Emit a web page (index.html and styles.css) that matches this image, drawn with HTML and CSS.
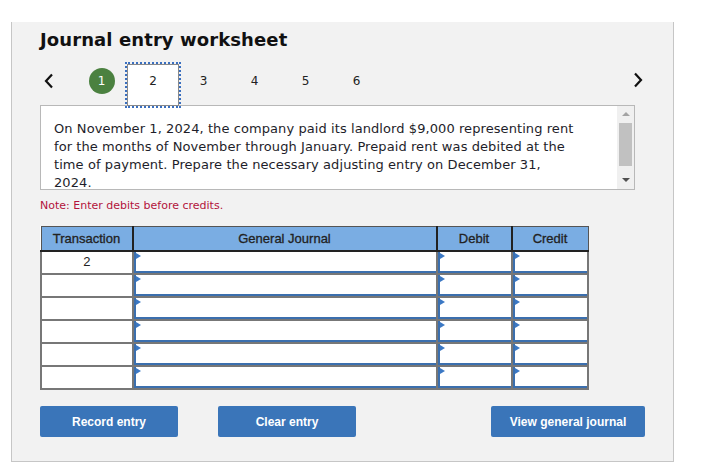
FILE: index.html
```html
<!DOCTYPE html>
<html>
<head>
<meta charset="utf-8">
<link rel="stylesheet" href="styles.css">
</head>
<body>
<div class="panel">
  <h1 class="title">Journal entry worksheet</h1>
  <div class="stepper">
    <span class="nav prev"><svg width="10" height="16" viewBox="0 0 10 16"><path d="M8 1.5 L2 8 L8 14.5" fill="none" stroke="#111" stroke-width="2.2"/></svg></span>
    <div class="steps">
      <span class="step done"><span class="dot">1</span></span>
      <span class="step active">2</span>
      <span class="step">3</span>
      <span class="step">4</span>
      <span class="step">5</span>
      <span class="step">6</span>
    </div>
    <span class="nav next"><svg width="10" height="16" viewBox="0 0 10 16"><path d="M2 1.5 L8 8 L2 14.5" fill="none" stroke="#111" stroke-width="2.2"/></svg></span>
  </div>
  <div class="problem">
    <div class="problem-text">On November 1, 2024, the company paid its landlord $9,000 representing rent for the months of November through January. Prepaid rent was debited at the time of payment. Prepare the necessary adjusting entry on December 31, 2024.</div>
    <div class="scrollbar">
      <span class="arrow up"></span>
      <span class="thumb"></span>
      <span class="arrow down"></span>
    </div>
  </div>
  <div class="note">Note: Enter debits before credits.</div>
  <table class="journal">
    <thead>
      <tr><th class="c-tr">Transaction</th><th class="c-gj">General Journal</th><th class="c-dr">Debit</th><th class="c-cr">Credit</th></tr>
    </thead>
    <tbody>
      <tr><td class="tr">2</td><td><div class="inp"></div></td><td><div class="inp"></div></td><td><div class="inp"></div></td></tr>
      <tr><td class="tr"></td><td><div class="inp"></div></td><td><div class="inp"></div></td><td><div class="inp"></div></td></tr>
      <tr><td class="tr"></td><td><div class="inp"></div></td><td><div class="inp"></div></td><td><div class="inp"></div></td></tr>
      <tr><td class="tr"></td><td><div class="inp"></div></td><td><div class="inp"></div></td><td><div class="inp"></div></td></tr>
      <tr><td class="tr"></td><td><div class="inp"></div></td><td><div class="inp"></div></td><td><div class="inp"></div></td></tr>
      <tr><td class="tr"></td><td><div class="inp"></div></td><td><div class="inp"></div></td><td><div class="inp"></div></td></tr>
    </tbody>
  </table>
  <div class="actions">
    <button class="btn">Record entry</button>
    <button class="btn">Clear entry</button>
    <button class="btn wide">View general journal</button>
  </div>
</div>
</body>
</html>
```
FILE: styles.css
```css
html, body { margin: 0; padding: 0; background: #fff; }
body { font-family: "DejaVu Sans", Verdana, sans-serif; color: #222; }

.panel {
  margin: 22px 0 0 11px;
  width: 605px;
  height: 439px;
  background: #f2f2f2;
  border: 1px solid #c6c6c6;
  border-top: none;
  padding: 0 28px 0 28px;
}

.title {
  margin: 0;
  padding-top: 7px;
  font-size: 18px;
  line-height: 22px;
  font-weight: bold;
  color: #111;
  letter-spacing: 0.1px;
}

.stepper {
  display: flex;
  align-items: flex-start;
  height: 36px;
  margin-top: 12px;
  width: 603px;
  position: relative;
  z-index: 2;
}
.nav { display: flex; align-items: center; width: 10px; height: 16px; margin-top: 10px; }
.prev { margin-left: 4px; }
.next { margin-left: auto; margin-top: 9px; }
.steps { display: flex; margin-left: 22px; }
.step {
  width: 51px;
  height: 36px;
  display: flex;
  align-items: center;
  justify-content: center;
  font-size: 12px;
  color: #222;
  box-sizing: border-box;
}
.dot {
  width: 26px; height: 26px;
  border-radius: 50%;
  background: #4b8140;
  color: #fff;
  display: flex; align-items: center; justify-content: center;
  font-size: 12px;
}
.step.active {
  width: 52px;
  margin-right: -1px;
  height: 42px;
  margin-top: 1px;
  padding-bottom: 8px;
  background: #fff;
  border: 1px solid #8a8a8a;
  outline: 2px dotted #3a6fbf;
  outline-offset: 0;
}

.problem {
  display: flex;
  width: 593px;
  height: 83px;
  border: 1px solid #b8b8b8;
  background: #fff;
  margin-top: 6px;
  overflow: hidden;
}
.problem-text {
  flex: 1;
  padding: 14px 40px 0 13px;
  font-size: 13px;
  line-height: 17.9px;
  letter-spacing: 0.08px;
  color: #1e1e2a;
}
.scrollbar {
  width: 17px;
  background: #f0f0f0;
  display: flex;
  flex-direction: column;
  align-items: center;
}
.arrow { width: 0; height: 0; border-left: 4px solid transparent; border-right: 4px solid transparent; }
.arrow.up { border-bottom: 4px solid #a3a3a3; margin-top: 6px; }
.arrow.down { border-top: 4px solid #505050; margin-top: auto; margin-bottom: 7px; }
.thumb { width: 13px; height: 43px; background: #c1c1c1; margin-top: 7px; }

.note {
  margin-top: 9px;
  font-size: 11px;
  color: #b3123c;
  line-height: 14px;
}

.journal {
  margin-top: 13px;
  border-collapse: collapse;
  table-layout: fixed;
  background: #fff;
}
.journal th {
  background: #7aade3;
  font-family: "Liberation Sans", Arial, sans-serif;
  font-size: 13px;
  font-weight: normal;
  color: #222;
  height: 23px;
  padding: 0;
  border: 1px solid #555;
  border-bottom: 2px solid #222;
  -webkit-text-stroke: 0.3px #222;
}
.journal th + th { border-left: 2px solid #222; }
.c-tr { width: 90px; }
.c-gj { width: 302px; }
.c-dr { width: 73px; }
.c-cr { width: 75px; }
.journal td {
  height: 21px;
  padding: 0;
  border: 2px solid #777;
  border-top: 1px solid #777;
  vertical-align: top;
}
.journal td.tr {
  text-align: center;
  font-family: "Liberation Sans", Arial, sans-serif;
  font-size: 13px;
  color: #222;
  line-height: 20px;
  border-left: 2px solid #777;
}
.inp {
  height: 19px;
  border-left: 2px solid #3b6fae;
  border-bottom: 2px solid #3b6fae;
  position: relative;
}
.inp::before {
  content: "";
  position: absolute;
  left: 0; top: 1px;
  border-top: 3px solid transparent;
  border-bottom: 3px solid transparent;
  border-left: 5px solid #3b78c4;
}

.actions {
  display: flex;
  gap: 40px;
  margin-top: 16px;
}
.btn {
  width: 138px;
  height: 31px;
  background: #3a75b9;
  color: #fff;
  border: none;
  border-radius: 2px;
  font-family: "Liberation Sans", Arial, sans-serif;
  font-weight: bold;
  font-size: 12px;
  padding: 0;
}
.btn.wide { width: 154px; margin-left: auto; }
```
